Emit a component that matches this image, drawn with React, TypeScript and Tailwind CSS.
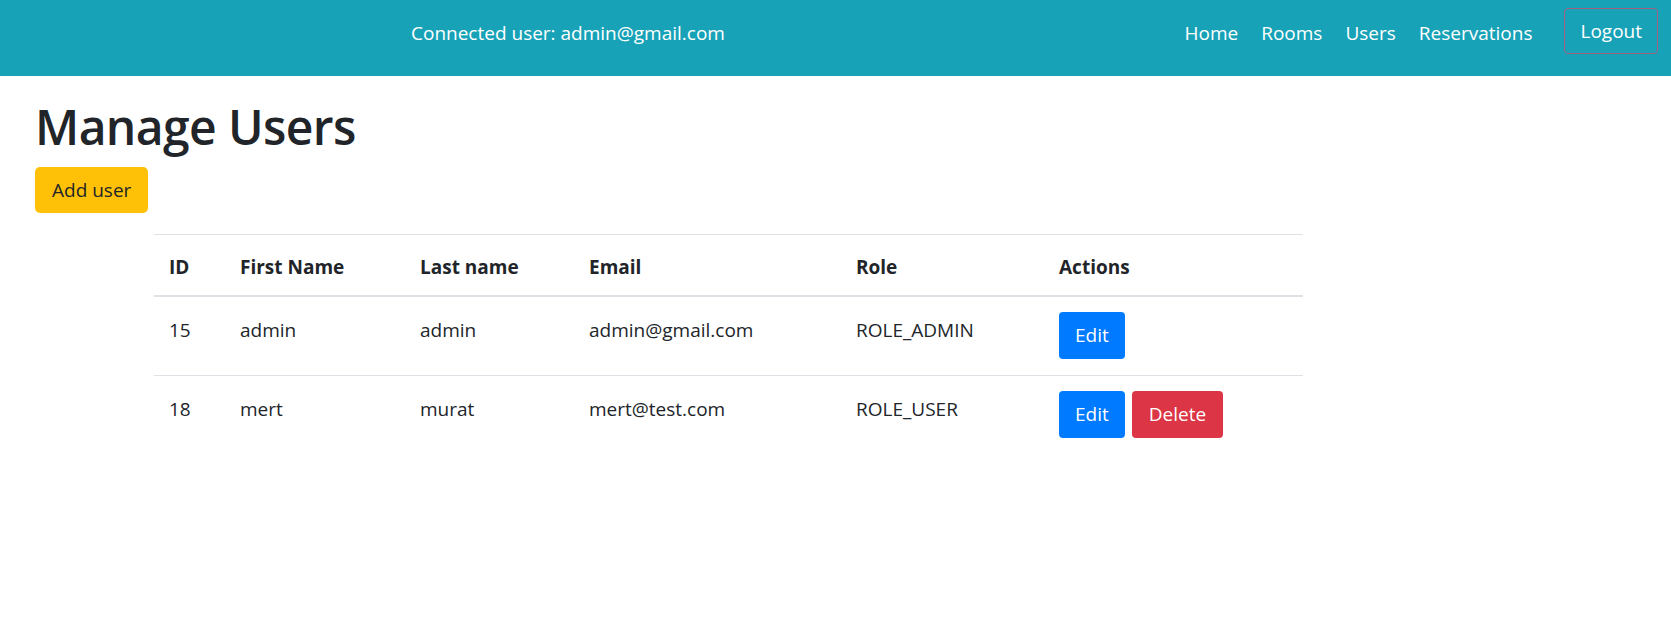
import React from 'react';

const users = [
  { id: 15, first: 'admin', last: 'admin', email: 'admin@gmail.com', role: 'ROLE_ADMIN', canDelete: false },
  { id: 18, first: 'mert', last: 'murat', email: 'mert@test.com', role: 'ROLE_USER', canDelete: true },
];

export default function App() {
  return (
    <div className="min-h-screen bg-white text-[#212529] font-['Open_Sans',sans-serif] text-[19px] leading-[30px]">
      {/* Navbar */}
      <header className="h-[76px] bg-[#17a2b8] flex items-start text-white">
        <span className="ml-[411px] mt-[18px] whitespace-nowrap">Connected user: admin@gmail.com</span>
        <nav className="ml-auto flex items-start mr-[13px]">
          <a className="mt-[18px] mr-[23px] cursor-pointer">Home</a>
          <a className="mt-[18px] mr-[23px] cursor-pointer">Rooms</a>
          <a className="mt-[18px] mr-[23px] cursor-pointer">Users</a>
          <a className="mt-[18px] mr-[32px] cursor-pointer">Reservations</a>
          <button className="mt-[8px] h-[46px] px-[15px] border border-[#a35f80] rounded-[4px] text-white">Logout</button>
        </nav>
      </header>

      <main className="px-[35px]">
        <h1 className="text-[48px] leading-[1.2] font-semibold mt-[22px] mb-[11px] tracking-[-0.6px]">Manage Users</h1>
        <button className="h-[46px] px-[17px] bg-[#ffc107] rounded-[5px] text-[#212529]">Add user</button>

        <table className="ml-[119px] mt-[21px] w-[1149px] border-collapse text-left">
          <thead>
            <tr className="border-t border-[#dee2e6] border-b-2">
              <th className="w-[71px] px-[15px] pt-[17px] pb-[13px] font-bold">ID</th>
              <th className="w-[180px] px-[15px] pt-[17px] pb-[13px] font-bold">First Name</th>
              <th className="w-[169px] px-[15px] pt-[17px] pb-[13px] font-bold">Last name</th>
              <th className="w-[267px] px-[15px] pt-[17px] pb-[13px] font-bold">Email</th>
              <th className="w-[203px] px-[15px] pt-[17px] pb-[13px] font-bold">Role</th>
              <th className="px-[15px] pt-[17px] pb-[13px] font-bold">Actions</th>
            </tr>
          </thead>
          <tbody>
            {users.map((u, i) => (
              <tr key={u.id} className={i === 0 ? 'border-b border-[#dee2e6]' : ''}>
                <td className="px-[15px] pt-[18px] align-top">{u.id}</td>
                <td className="px-[15px] pt-[18px] align-top">{u.first}</td>
                <td className="px-[15px] pt-[18px] align-top">{u.last}</td>
                <td className="px-[15px] pt-[18px] align-top">{u.email}</td>
                <td className="px-[15px] pt-[18px] align-top">{u.role}</td>
                <td className="px-[15px] pt-[15px] pb-[16px] align-top">
                  <div className="flex gap-[7px]">
                    <button className="h-[47px] px-[16px] bg-[#007bff] text-white rounded-[4px]">Edit</button>
                    {u.canDelete && (
                      <button className="h-[47px] px-[17px] bg-[#dc3545] text-white rounded-[4px]">Delete</button>
                    )}
                  </div>
                </td>
              </tr>
            ))}
          </tbody>
        </table>
      </main>
    </div>
  );
}
